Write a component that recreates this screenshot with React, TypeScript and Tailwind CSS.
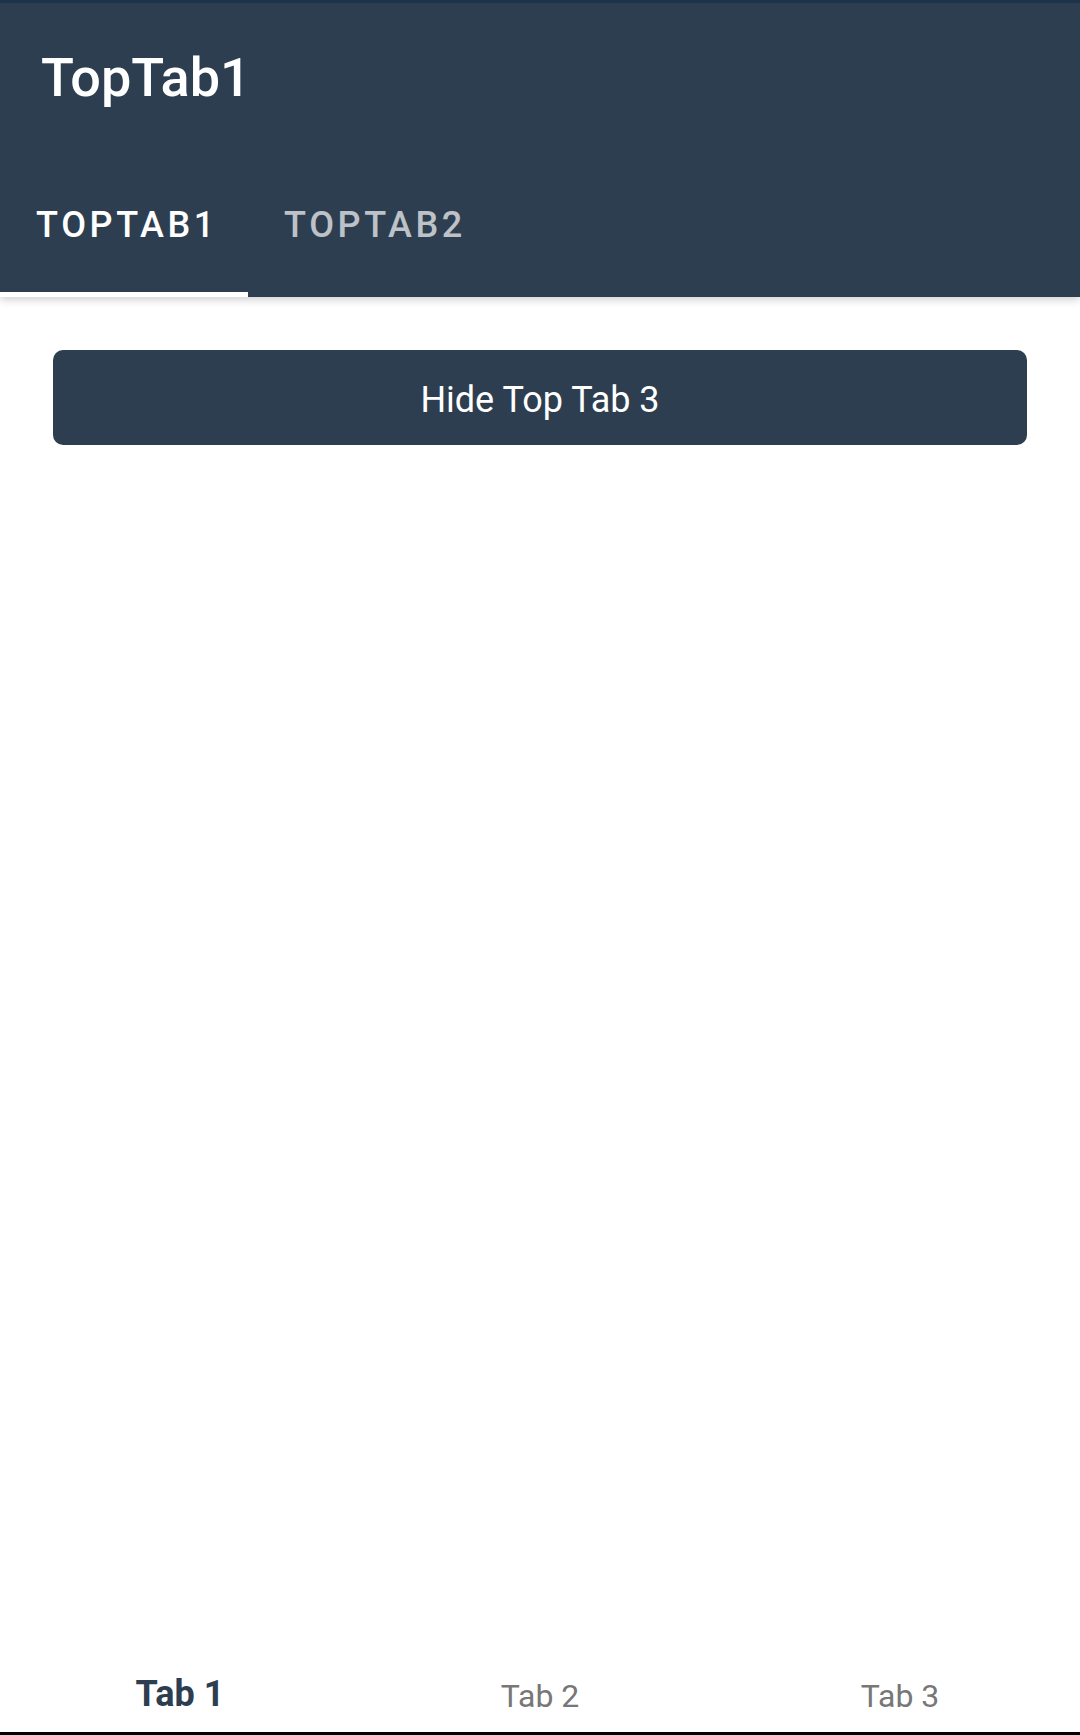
import { useState } from "react";

const NAVY = "#2d3e50";

const topTabs = ["TopTab1", "TopTab2"];
const bottomTabs = ["Tab 1", "Tab 2", "Tab 3"];

export default function App() {
  const [topTab, setTopTab] = useState(0);
  const [bottomTab, setBottomTab] = useState(0);

  return (
    <div className="flex h-[1735px] w-[1080px] flex-col bg-white font-['Roboto',sans-serif]">
      {/* Header: status strip, toolbar, top tabs */}
      <header className="relative z-10 bg-[#2d3e50] shadow-[0_3px_8px_rgba(0,0,0,0.18)]">
        <div className="h-[3px] bg-[#1c3349]" />
        <div className="flex h-[150px] items-center px-[41px]">
          <h1 className="text-[54px] font-medium leading-none text-white">TopTab1</h1>
        </div>
        <nav className="flex h-[144px]">
          {topTabs.map((t, i) => (
            <button
              key={t}
              onClick={() => setTopTab(i)}
              className="relative flex w-[248px] items-center justify-center pl-[6px] text-[36px] font-medium uppercase leading-none tracking-[3.6px]"
              style={{ color: topTab === i ? "#ffffff" : "rgba(255,255,255,0.7)" }}
            >
              {t}
              {topTab === i && <span className="absolute bottom-0 left-0 h-[5px] w-full bg-white" />}
            </button>
          ))}
        </nav>
      </header>

      {/* Content */}
      <main className="flex-1 px-[53px] pt-[53px]">
        <button className="flex h-[95px] w-full items-center justify-center rounded-[10px] bg-[#2d3e50] pt-[5px] text-[36px] leading-none text-white">
          Hide Top Tab 3
        </button>
      </main>

      {/* Bottom tabs */}
      <footer className="flex h-[150px] border-b-[3px] border-black">
        {bottomTabs.map((t, i) => (
          <button
            key={t}
            onClick={() => setBottomTab(i)}
            className="flex flex-1 items-end justify-center pb-[20px] leading-none"
            style={
              bottomTab === i
                ? { color: NAVY, fontWeight: 700, fontSize: 36 }
                : { color: "#777777", fontWeight: 400, fontSize: 32 }
            }
          >
            {t}
          </button>
        ))}
      </footer>
    </div>
  );
}
